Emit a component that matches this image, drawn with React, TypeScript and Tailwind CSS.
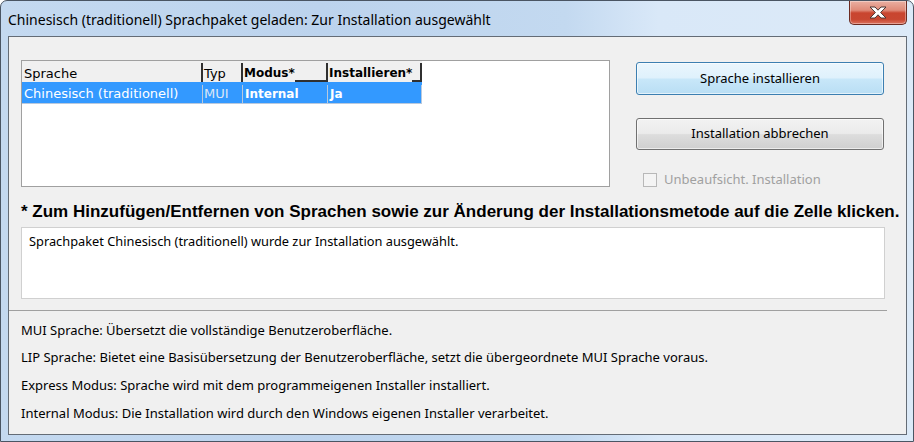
import React from 'react';

const ui = { fontFamily: '"Noto Sans", "Open Sans", Arial, sans-serif' };
const grid = { fontFamily: '"DejaVu Sans", Verdana, sans-serif' };

function CloseButton() {
  return (
    <div className="flex h-[24px] w-[58px] items-center justify-center rounded-b-[5px] border border-t-0 border-[#6b2b21] bg-[linear-gradient(180deg,#eab0a2_0%,#df8a78_40%,#c9452f_52%,#c84731_80%,#dc735e_100%)] shadow-[inset_0_0_0_1px_rgba(255,255,255,0.35)]">
      <svg width="18" height="13" viewBox="0 0 18 13">
        <polygon
          points="1,1 6,1 9,4.2 12,1 17,1 11.6,6.5 17,12 12,12 9,8.8 6,12 1,12 6.4,6.5"
          fill="#ffffff"
          stroke="#4a3633"
          strokeWidth="1"
          strokeLinejoin="round"
        />
      </svg>
    </div>
  );
}

function LanguageList() {
  return (
    <div className="h-[127px] w-[589px] border border-[#a0a0a0] bg-white" style={grid}>
      <div className="flex h-[21px] w-[400px] bg-[#f0f0f0] pt-[2px] text-[13px] leading-[21px] text-black">
        <div className="w-[181px] border-r-2 border-r-[#303030] pl-[2px]">Sprache</div>
        <div className="w-[40px] border-r-2 border-r-[#303030] pl-[1px]">Typ</div>
        <div className="flex w-[85px] border-r-2 border-r-[#303030] pl-[1px] text-[12px] font-bold">
          <span>Modus*</span>
          <span className="flex-1 border-b-2 border-b-[#303030]" />
        </div>
        <div className="flex w-[94px] border-r-2 border-r-[#303030] pl-[1px] text-[12px] font-bold">
          <span>Installieren*</span>
          <span className="flex-1 border-b-2 border-b-[#303030]" />
        </div>
      </div>
      <div className="flex h-[22px] w-[400px] bg-[#3399ff] pt-[3px] text-[13px] leading-[18px] text-white">
        <div className="w-[181px] border-r border-b border-[#b9c9dd] pl-[2px]">Chinesisch (traditionell)</div>
        <div className="w-[40px] border-r border-b border-[#b9c9dd] pl-[1px] text-[#dde7f6]">MUI</div>
        <div className="w-[85px] border-r border-b border-[#b9c9dd] pl-[2px] text-[12px] font-bold">Internal</div>
        <div className="w-[94px] border-r border-b border-[#b9c9dd] pl-[2px] text-[12px] font-bold">Ja</div>
      </div>
    </div>
  );
}

export default function App() {
  const notes = [
    'MUI Sprache: Übersetzt die vollständige Benutzeroberfläche.',
    'LIP Sprache: Bietet eine Basisübersetzung der Benutzeroberfläche, setzt die übergeordnete MUI Sprache voraus.',
    'Express Modus: Sprache wird mit dem programmeigenen Installer installiert.',
    'Internal Modus: Die Installation wird durch den Windows eigenen Installer verarbeitet.',
  ];

  return (
    <div className="h-[442px] w-[914px] overflow-hidden bg-white" style={ui}>
      <div className="flex h-full flex-col rounded-t-[7px] border border-[#4a5563] bg-[linear-gradient(90deg,#c4d9f0_0%,#bcd3ed_35%,#c3d9f0_62%,#d9e8f8_72%,#dceaf8_100%)]">
        {/* title bar */}
        <div className="flex h-[35px] items-start justify-between">
          <span className="self-center pl-[7px] pt-[2px] text-[14px] text-black">
            Chinesisch (traditionell) Sprachpaket geladen: Zur Installation ausgewählt
          </span>
          <div className="mr-[6px]">
            <CloseButton />
          </div>
        </div>

        {/* client area */}
        <div className="ml-[7px] h-[399px] w-[899px] border border-[#646c76] bg-[#f0f0f0]">
          <div className="flex pl-[12px] pt-[23px]">
            <LanguageList />
            <div className="ml-[26px] flex w-[248px] flex-col">
              <button className="mt-[2px] h-[33px] rounded-[3px] border border-[#3c7fb1] bg-[linear-gradient(180deg,#eaf6fd_0%,#dff1fc_48%,#c8e7f9_52%,#b9def4_100%)] text-[13px] text-black shadow-[inset_0_0_0_1px_rgba(255,255,255,0.6)]">
                Sprache installieren
              </button>
              <button className="mt-[23px] h-[32px] rounded-[3px] border border-[#707070] bg-[linear-gradient(180deg,#f2f2f2_0%,#ebebeb_48%,#dddddd_52%,#cfcfcf_100%)] text-[13px] text-black shadow-[inset_0_0_0_1px_rgba(255,255,255,0.6)]">
                Installation abbrechen
              </button>
              <label className="ml-[7px] mt-[20px] flex items-center text-[13px] text-[#a0a0a0]">
                <span className="h-[14px] w-[14px] border border-[#b8b8b8] bg-[#f4f4f4]" />
                <span className="ml-[7px]">Unbeaufsicht. Installation</span>
              </label>
            </div>
          </div>

          <div className="mt-[12px] pl-[12px] text-[17px] font-bold leading-[20px] text-black" style={{ fontFamily: '"Liberation Sans", Arial, sans-serif' }}>
            * Zum Hinzufügen/Entfernen von Sprachen sowie zur Änderung der Installationsmetode auf die Zelle klicken.
          </div>

          <div className="ml-[12px] mt-[5px] h-[72px] w-[864px] border border-[#d0d0d0] bg-white pl-[7px] pt-[4px] text-[12.8px] leading-[18px] text-black">
            Sprachpaket Chinesisch (traditionell) wurde zur Installation ausgewählt.
          </div>

          <div className="mt-[11px] h-px w-[878px] bg-[#a0a0a0]" />
          <div className="mt-[6px] pl-[12px] text-[13px] leading-[27.7px] text-black">
            {notes.map((n) => (
              <div key={n}>{n}</div>
            ))}
          </div>
        </div>
      </div>
    </div>
  );
}
